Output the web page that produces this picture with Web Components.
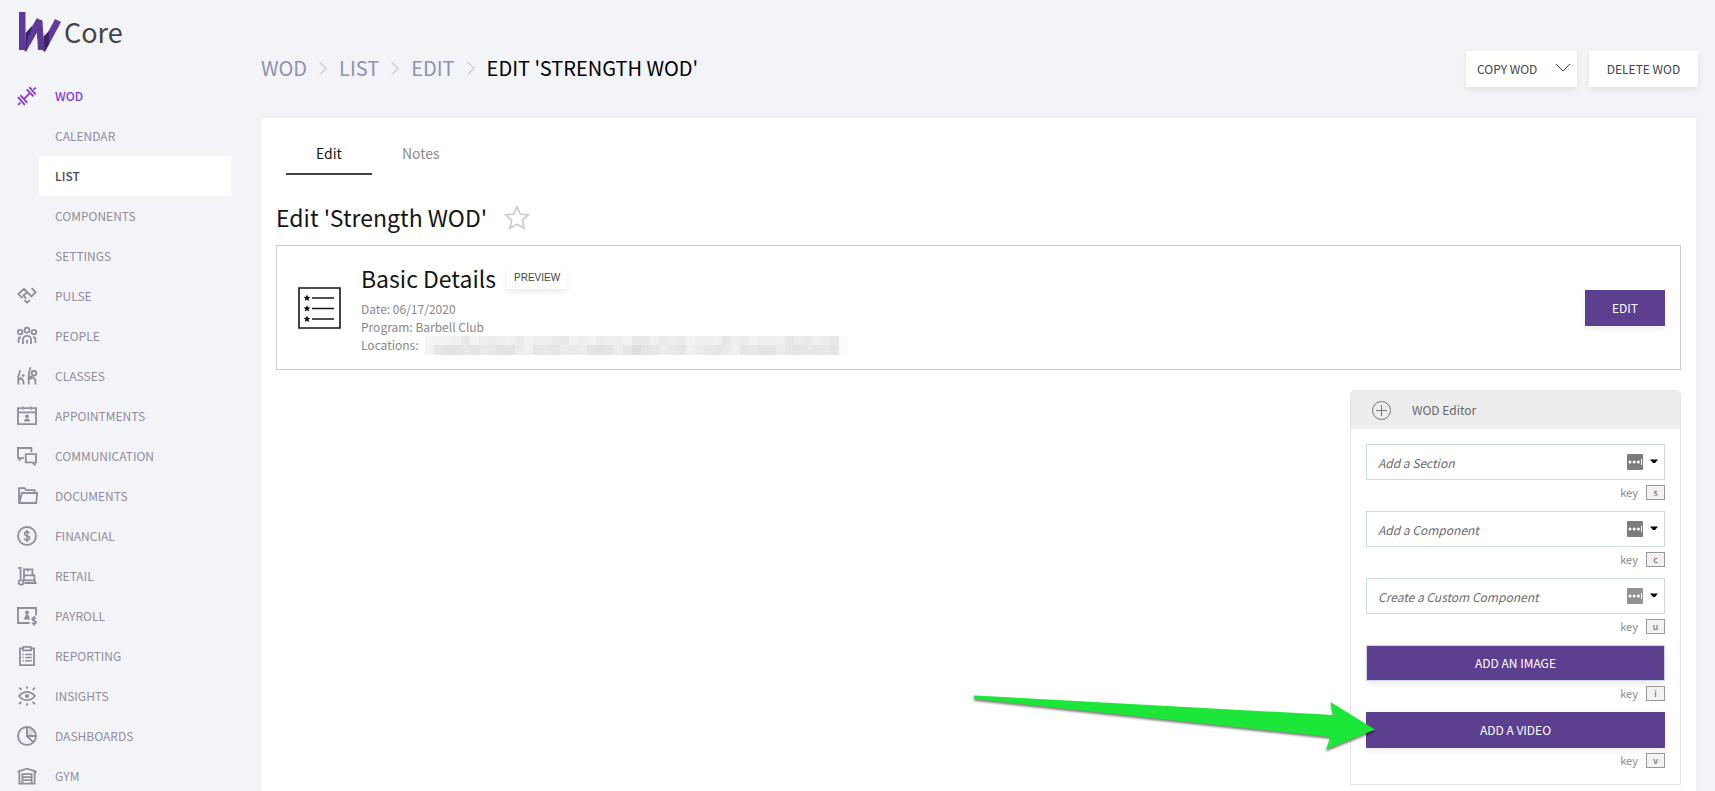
<!DOCTYPE html>
<html lang="en">
<head>
<meta charset="utf-8">
<title>Edit 'Strength WOD'</title>
<style>
html, body { margin: 0; }
body {
  background: #f3f4f8;
  color: #161616;
  font-family: "Noto Sans CJK SC", "Noto Sans", sans-serif;
  font-size: 12px;
  line-height: 18px;
  --purple: #5c3f8e;
  --lift: 0 3px 6px rgba(0, 0, 0, .08);
}
</style>
</head>
<body>
<wod-app></wod-app>

<script>
const ICONS = {
  wod: '<path d="M6.6 13.4 12.4 7.6" stroke-width="1.9"/><path d="M1 11.2 7.8 18.8M3.4 9.2l6.8 7.6M9.7 3.4l6.8 7M12.3 1.1l6.4 7.4M1.2 18.8l2.2-2.2M16.4 3.6l2.4-2" stroke-width="1.8"/>',
  pulse: '<path d="M5.4 12.2 1.4 8 7 2.8 14.4 10.4 18.6 6.2 14.6 2.2M10.2 6 6.4 9.6 9.2 12.6M7.3 14.2l2.7 2.4 2.7-2.4"/>',
  people: '<circle cx="10" cy="4.2" r="2.5"/><circle cx="3.1" cy="6.1" r="2.3"/><circle cx="16.9" cy="6.1" r="2.3"/><path d="M5.9 18v-4.6a4.1 3.6 0 0 1 8.2 0V18M1.6 17v-3.4q0-2.1 2.2-2.6M18.4 17v-3.4q0-2.1-2.2-2.6M10 14v3.6"/>',
  classes: '<circle cx="6.2" cy="9.6" r="1.4" fill="currentColor" stroke="none"/><circle cx="17" cy="7.3" r="2.3"/><path d="M3.3 4.2 1.3 10.6v8M1.7 12.6l3.8.6 1 2.6v2.8M1.7 13.4l3-1.8M13.4 1.2l-1.7 7.6v9.8M12 10.4l4.4 1.2 2 2.6v4.4M12 12.8l2.8-.4"/>',
  appointments: '<path d="M4.6 2.2H1v16h18v-16h-3.6M7 2.2h6M1 6.4h18M5.8.4v3.4M14.2.4v3.4"/><circle cx="10" cy="10.2" r="1.8" fill="currentColor" stroke="none"/><path d="M7 15.6q.2-3 3-3t3 3z" fill="currentColor" stroke="none"/>',
  communication: '<path d="M7 11.8H5.2l-2.8 2v-2H1V2h13.4v4.2M8.8 8.2H19v8.2h-1.2v2.2l-2.6-2.2H8.8z"/>',
  documents: '<path d="M2 17.2V2.2h5.4l1.8 2h8.4v2.6M4.8 7h15.4l-1 10H2.4z"/>',
  financial: '<circle cx="10" cy="10" r="9"/><path d="M12.5 7.3q-.6-1.4-2.6-1.4-2.3 0-2.3 1.9 0 1.6 2.4 2.1 2.6.5 2.6 2.2 0 2-2.6 2-2.2 0-2.7-1.7M10 4.1v11.8" stroke-width="1.6"/>',
  retail: '<path d="M1 1.8h2.6v11.4M7.4 17h11.2l-1-2.6M7 9.4V3.4h8.4v6M7 9.4h10.4v5H7zM11 3.4v2"/><circle cx="4" cy="16.4" r="2.3"/>',
  payroll: '<path d="M12.6 17H1V2h18v7.4"/><circle cx="10" cy="6.4" r="2" fill="currentColor" stroke="none"/><path d="M6.8 13.4h6.4l-2-5h-2.4z" fill="currentColor" stroke="none"/><path d="M18.9 12.7q-.5-1-1.9-1-1.8 0-1.8 1.4t2 1.6q2 .3 2 1.7t-2.2 1.5q-1.6 0-2-1.2M17 10v9.8" stroke-width="1.5"/>',
  reporting: '<path d="M5.6 2.4H3v16.8h14V2.4h-2.6M6 4.4V1.6q0-.8.8-.8h6.4q.8 0 .8.8v2.8z"/><path d="M5.4 8.4h1.4M8.2 8.4h6.6M5.4 11.6h1.4M8.2 11.6h6.6M5.4 14.8h1.4M8.2 14.8h6.6" stroke-width="1.5"/>',
  insights: '<path d="M2 10q3.600-4.200 8-4.200T18 10q-3.600 4.200-8 4.200T2 10zM10 .2v2.600M10 17.200v2.600M2 1.600l2.400 2.200M18 1.600l-2.400 2.200M2 18l2.400-2.200M18 18l-2.400-2.200"/><circle cx="10" cy="10" r="2.1" fill="currentColor" stroke="none"/>',
  dashboards: '<circle cx="10" cy="10" r="9"/><path d="M10 1v9h9M10 10l6.400 6.400"/><path d="M11 5.600l3-3M11 8.400l5-5M13 9.400l5-5" stroke-width=".8"/>',
  gym: '<path d="M1.400 6.600V5.400L10 2.600l8.600 2.800v1.200H17M3 6.600H1.400M2.400 6.600v11h15.200v-11M5.400 17.400V8.200h9.200v9.200M6 11.200h8M6 14.200h8"/>'
};

function define(name, html) {
  const template = document.createElement('template');
  template.innerHTML = html;
  customElements.define(name, class extends HTMLElement {
    constructor() {
      super();
      this.attachShadow({ mode: 'open' }).append(template.content.cloneNode(true));
    }
  });
}

/* Sidebar */
customElements.define('nav-icon', class extends HTMLElement {
  connectedCallback() {
    this.attachShadow({ mode: 'open' }).innerHTML = `
      <style>
        :host { display: block; width: 20px; height: 20px; }
        svg { display: block; overflow: visible; }
      </style>
      <svg width="20" height="20" viewBox="0 0 20 20" fill="none" stroke="currentColor" stroke-width="1.8" aria-hidden="true">${ICONS[this.getAttribute('name')]}</svg>`;
  }
});

define('nav-item', `
  <style>
    :host { display: block; padding: 0 15px 0 17px; color: #918d9b; }
    a { display: grid; grid-template-columns: 20px 1fr; column-gap: 18px; align-items: center; height: 40px; color: inherit; text-decoration: none; }
    :host([active]) { color: #8438d8; font-weight: 500; }
  </style>
  <a href="#"><slot name="icon"></slot><span><slot></slot></span></a>`);

define('nav-subitem', `
  <style>
    :host { display: block; padding: 0 15px 0 39px; color: #918d9b; }
    a { display: flex; align-items: center; height: 40px; padding: 0 16px; color: inherit; text-decoration: none; }
    :host([active]) { color: #4a4658; font-weight: 500; }
    :host([active]) a { background: #fff; }
  </style>
  <a href="#"><slot></slot></a>`);

define('brand-logo', `
  <style>
    :host { display: block; padding: 10px 18px 0; }
    a { display: flex; align-items: center; gap: 3px; height: 44px; color: #444; text-decoration: none; font-size: 27px; line-height: 44px; }
    svg { display: block; }
  </style>
  <a href="#">
    <svg width="43" height="42" viewBox="0 0 43 42" aria-hidden="true">
      <path d="M8 26 19 7 25 11 8 41 6 39z" fill="#62399a"/>
      <path d="M27 27 37 8 43 11 27 41 24 39z" fill="#62399a"/>
      <path d="M7.500 22 14 15 14 26 7.500 40z" fill="#3b2364"/>
      <path d="M19 10 24 9 25 27 22 22z" fill="#3b2364"/>
      <path d="M26 25 31 20 31 33 26 41z" fill="#3b2364"/>
      <path d="M18 8.500 24 9 27 39 20 39z" fill="#5c3a90"/>
      <path d="M10 26 18 9 24 10 8 40z" fill="#62399a"/>
      <path d="M1 1h6.500v38H1z" fill="#62399a"/>
    </svg>
    <span>Core</span>
  </a>`);

define('side-bar', `
  <style>
    :host { display: block; height: 100vh; overflow: hidden; }
    nav { padding-top: 22px; }
  </style>
  <brand-logo></brand-logo>
  <nav aria-label="Main">
    <nav-item active><nav-icon slot="icon" name="wod"></nav-icon>WOD</nav-item>
    <nav-subitem>CALENDAR</nav-subitem>
    <nav-subitem active>LIST</nav-subitem>
    <nav-subitem>COMPONENTS</nav-subitem>
    <nav-subitem>SETTINGS</nav-subitem>
    <nav-item><nav-icon slot="icon" name="pulse"></nav-icon>PULSE</nav-item>
    <nav-item><nav-icon slot="icon" name="people"></nav-icon>PEOPLE</nav-item>
    <nav-item><nav-icon slot="icon" name="classes"></nav-icon>CLASSES</nav-item>
    <nav-item><nav-icon slot="icon" name="appointments"></nav-icon>APPOINTMENTS</nav-item>
    <nav-item><nav-icon slot="icon" name="communication"></nav-icon>COMMUNICATION</nav-item>
    <nav-item><nav-icon slot="icon" name="documents"></nav-icon>DOCUMENTS</nav-item>
    <nav-item><nav-icon slot="icon" name="financial"></nav-icon>FINANCIAL</nav-item>
    <nav-item><nav-icon slot="icon" name="retail"></nav-icon>RETAIL</nav-item>
    <nav-item><nav-icon slot="icon" name="payroll"></nav-icon>PAYROLL</nav-item>
    <nav-item><nav-icon slot="icon" name="reporting"></nav-icon>REPORTING</nav-item>
    <nav-item><nav-icon slot="icon" name="insights"></nav-icon>INSIGHTS</nav-item>
    <nav-item><nav-icon slot="icon" name="dashboards"></nav-icon>DASHBOARDS</nav-item>
    <nav-item><nav-icon slot="icon" name="gym"></nav-icon>GYM</nav-item>
  </nav>`);

/* Buttons */
define('flat-button', `
  <style>
    :host { display: block; }
    button { display: flex; align-items: center; justify-content: center; gap: 16px; width: 100%; height: 36px; margin: 0; padding: 0 16px; border: 0; background: #fff; color: #444; font: inherit; box-shadow: var(--lift); }
    :host([menu]) button { justify-content: space-between; padding: 0 6px 0 11px; }
    :host([primary]) button { background: var(--purple); color: #fff; }
    :host([outlined]) button { border: 1px solid #ccd8e4; }
    :host([small]) button { height: 22px; padding: 0 7px; font: 10px/22px "Liberation Sans", Arial, sans-serif; }
  </style>
  <button type="button"><slot></slot><slot name="icon"></slot></button>`);

/* Page header */
define('bread-crumb', `
  <style>
    :host { display: block; padding-bottom: 3px; font-size: 20px; line-height: 30px; }
    ol { display: flex; align-items: center; gap: 12px; margin: 0; padding: 0; list-style: none; }
    li { display: flex; align-items: center; gap: 12px; }
    a { color: #8d93ab; text-decoration: none; }
    [aria-current] { color: #000; }
    svg { display: block; }
  </style>
  <nav aria-label="Breadcrumb">
    <ol>
      <li><a href="#">WOD</a><svg width="8" height="14" fill="none" stroke="#a9aec0" aria-hidden="true"><path d="M1 1.500 7 7.500 1 13.500"/></svg></li>
      <li><a href="#">LIST</a><svg width="8" height="14" fill="none" stroke="#a9aec0" aria-hidden="true"><path d="M1 1.500 7 7.500 1 13.500"/></svg></li>
      <li><a href="#">EDIT</a><svg width="8" height="14" fill="none" stroke="#a9aec0" aria-hidden="true"><path d="M1 1.500 7 7.500 1 13.500"/></svg></li>
      <li><span aria-current="page">EDIT 'STRENGTH WOD'</span></li>
    </ol>
  </nav>`);

define('page-header', `
  <style>
    :host { display: flex; align-items: center; justify-content: space-between; height: 36px; padding: 51px 17px 31px 0; }
    .actions { display: flex; gap: 12px; }
    flat-button[menu] { width: 111px; }
    flat-button:not([menu]) { width: 109px; }
    svg { display: block; }
  </style>
  <bread-crumb></bread-crumb>
  <div class="actions">
    <flat-button menu>COPY WOD<svg slot="icon" width="16" height="12" fill="none" stroke="#444" aria-hidden="true"><path d="M1 1 8 8 15 1"/></svg></flat-button>
    <flat-button>DELETE WOD</flat-button>
  </div>`);

/* Panel contents */
define('tab-item', `
  <style>
    :host { display: block; font-size: 14px; line-height: 20px; color: #8b8b8b; }
    button { display: block; height: 37px; margin: 0; padding: 5px 30px 12px; border: 0; background: none; color: inherit; font: inherit; }
    :host([selected]) { color: #161616; }
    :host([selected]) button { border-bottom: 2px solid #444; padding-bottom: 10px; }
  </style>
  <button type="button"><slot></slot></button>`);

/* Mosaic that hides the location names: two rows of grey cells */
const SHADES = [
  'f5 f2 f2 f0 e8 f4 ee ec ee f0 eb f2 ef ee ea e8 f2 ee f3 ec ee ef f2 e9 e9 f0 ea ee eb f3 ef ee f0 e6 ef eb f2 ee ef f0 e6 ec e9 f0 ec e8 fb',
  'f2 e7 e3 e3 e7 e4 e9 e6 e3 e3 ec f0 e6 e8 e5 ed e9 ec e4 e3 e4 ee e6 de e5 e6 ed e8 e6 f0 eb e8 e5 eb f0 e6 e8 e3 e4 ed e6 e4 e7 e5 e7 e3 fb'
];
customElements.define('redacted-text', class extends HTMLElement {
  connectedCallback() {
    const cells = SHADES.map((row, y) => row.split(' ').map((c, x) =>
      `<rect x="${x * 9}" y="${y * 9}" width="9" height="${y ? 10 : 9}" fill="#${c}${c}${c}"/>`).join('')).join('');
    this.attachShadow({ mode: 'open' }).innerHTML = `
      <style>
        :host { display: block; }
        svg { display: block; }
      </style>
      <svg width="423" height="19" viewBox="0 0 423 19" aria-hidden="true" shape-rendering="crispEdges">${cells}</svg>`;
  }
});

define('details-card', `
  <style>
    :host { display: flex; align-items: center; gap: 20px; padding: 16px 15px 15px 21px; border: 1px solid #ccc; }
    .text { flex: 1; }
    .title { display: flex; align-items: center; gap: 11px; height: 32px; }
    h2 { margin: 0; font-size: 23px; line-height: 32px; font-weight: 400; }
    .lines { padding-top: 6px; color: #888; }
    p { display: flex; gap: 6px; margin: 0; height: 18px; line-height: 18px; }
    svg { display: block; }
    flat-button[primary] { width: 80px; }
  </style>
  <svg width="43" height="42" fill="none" stroke="#161616" aria-hidden="true">
    <path d="M1 1h41v40H1z" stroke-width="1.600"/>
    <path d="M14 11h22M14 21.500h22M14 32h22" stroke-width="1.600"/>
    <g fill="#161616" stroke="none">
      <path d="M9 7.500l1 2.300 2.500.2-1.900 1.600.6 2.400L9 12.700 6.800 14l.6-2.400L5.500 10l2.500-.2z"/>
      <path d="M9 18l1 2.300 2.500.2-1.900 1.600.6 2.400L9 23.200l-2.200 1.300.6-2.400-1.900-1.600 2.500-.2z"/>
      <path d="M9 28.500l1 2.300 2.500.2-1.900 1.600.6 2.400L9 33.700 6.800 35l.6-2.400L5.500 31l2.500-.2z"/>
    </g>
  </svg>
  <div class="text">
    <div class="title"><h2>Basic Details</h2><flat-button small>PREVIEW</flat-button></div>
    <div class="lines">
      <p>Date: 06/17/2020</p>
      <p>Program: Barbell Club</p>
      <p>Locations: <redacted-text></redacted-text></p>
    </div>
  </div>
  <flat-button primary>EDIT</flat-button>`);

define('key-hint', `
  <style>
    :host { display: flex; align-items: center; justify-content: flex-end; gap: 8px; height: 15px; margin-top: 5px; color: #888; font-size: 11px; line-height: 15px; }
    kbd { box-sizing: border-box; width: 19px; height: 15px; border: 1px solid #999; background: #f3f1f3; color: #555; font: 9px/13px "Noto Sans CJK SC", sans-serif; text-align: center; }
  </style>
  <span>key</span><kbd><slot></slot></kbd>`);

customElements.define('combo-field', class extends HTMLElement {
  connectedCallback() {
    const text = this.getAttribute('label');
    this.attachShadow({ mode: 'open' }).innerHTML = `
      <style>
        :host { display: block; }
        .box { box-sizing: border-box; display: flex; align-items: center; height: 36px; padding: 0 5px 0 11px; border: 1px solid #ccd8e4; background: #fff; }
        input { flex: 1; min-width: 0; height: 30px; margin: 0; padding: 0; border: 0; outline: 0; background: none; font: inherit; }
        input::placeholder { color: #6c6c6c; font-style: italic; opacity: 1; }
        svg { display: block; }
      </style>
      <div class="box">
        <input type="text" placeholder="${text}" aria-label="${text}">
        <svg width="32" height="16" aria-hidden="true">
          <rect width="16" height="16" rx="1" fill="${this.hasAttribute('dim') ? '#929292' : '#7d7d7d'}"/>
          <g fill="#fff"><circle cx="3" cy="8" r="1.500"/><circle cx="7.200" cy="8" r="1.500"/><circle cx="11.400" cy="8" r="1.500"/><path d="M14 5h1v6h-1z"/></g>
          <path d="M23 5.500h8l-3 3.500h-2z" fill="#000"/>
        </svg>
      </div>`;
  }
});

define('pointer-arrow', `
  <style>
    :host { display: block; position: absolute; right: calc(100% - 11px); top: -26px; pointer-events: none; }
    svg { display: block; overflow: visible; filter: drop-shadow(0 2px 1px rgba(0, 0, 0, .5)); }
  </style>
  <svg width="404" height="60" aria-hidden="true">
    <path d="M2 9.500 360 29 357.500 16 402 43.500 353 63.500 357.500 51 2 13q-3-1.700 0-3.500z" fill="#1ce637"/>
  </svg>`);

define('wod-editor', `
  <style>
    :host { display: block; box-sizing: border-box; width: 331px; border: 1px solid #e4e4e4; border-radius: 5px 5px 0 0; }
    header { display: flex; align-items: center; gap: 20px; height: 38px; padding: 0 20px; background: #ededed; color: #666; border-radius: 4px 4px 0 0; }
    h2 { margin: 0; font-size: 12px; font-weight: 400; }
    svg { display: block; }
    .body { display: grid; gap: 11px; padding: 15px 15px 16px; }
    .target { position: relative; }
  </style>
  <header>
    <svg width="21" height="21" fill="none" stroke="#777" aria-hidden="true"><circle cx="10.500" cy="10.500" r="9"/><path d="M10.500 5v11M5 10.500h11"/></svg>
    <h2>WOD Editor</h2>
  </header>
  <div class="body">
    <div><combo-field label="Add a Section"></combo-field><key-hint>s</key-hint></div>
    <div><combo-field label="Add a Component"></combo-field><key-hint>c</key-hint></div>
    <div><combo-field label="Create a Custom Component" dim></combo-field><key-hint>u</key-hint></div>
    <div><flat-button primary outlined>ADD AN IMAGE</flat-button><key-hint>i</key-hint></div>
    <div class="target"><flat-button primary>ADD A VIDEO</flat-button><key-hint>v</key-hint><pointer-arrow></pointer-arrow></div>
  </div>`);

define('wod-panel', `
  <style>
    :host { display: block; flex: 1; margin-right: 19px; padding: 20px 15px 15px; background: #fff; box-shadow: 0 0 8px rgba(0, 0, 0, .05); }
    .tabs { display: flex; padding: 0 10px; }
    .heading { display: flex; align-items: center; gap: 17px; height: 40px; padding-top: 22px; padding-bottom: 8px; }
    h1 { margin: 0; font-size: 23px; line-height: 40px; font-weight: 400; }
    .star { display: block; margin: 0; padding: 0; border: 0; background: none; }
    svg { display: block; }
    wod-editor { margin: 20px 0 0 auto; }
  </style>
  <div class="tabs"><tab-item selected>Edit</tab-item><tab-item>Notes</tab-item></div>
  <div class="heading">
    <h1>Edit 'Strength WOD'</h1>
    <button class="star" type="button" aria-label="Favourite">
      <svg width="26" height="25" viewBox="0 0 26 25" fill="none" stroke="#ccc" stroke-width="1.700"><path d="M13 1.800l3.300 7.300 8 .9-5.900 5.400 1.600 7.800-7-3.900-7 3.900 1.600-7.800L1.700 10l8-.9z"/></svg>
    </button>
  </div>
  <details-card></details-card>
  <wod-editor></wod-editor>`);

define('wod-app', `
  <style>
    :host { display: grid; grid-template-columns: 246px 1fr; column-gap: 15px; height: 100vh; overflow: hidden; }
    main { display: flex; flex-direction: column; min-width: 0; }
  </style>
  <side-bar></side-bar>
  <main><page-header></page-header><wod-panel></wod-panel></main>`);
</script>
</body>
</html>
